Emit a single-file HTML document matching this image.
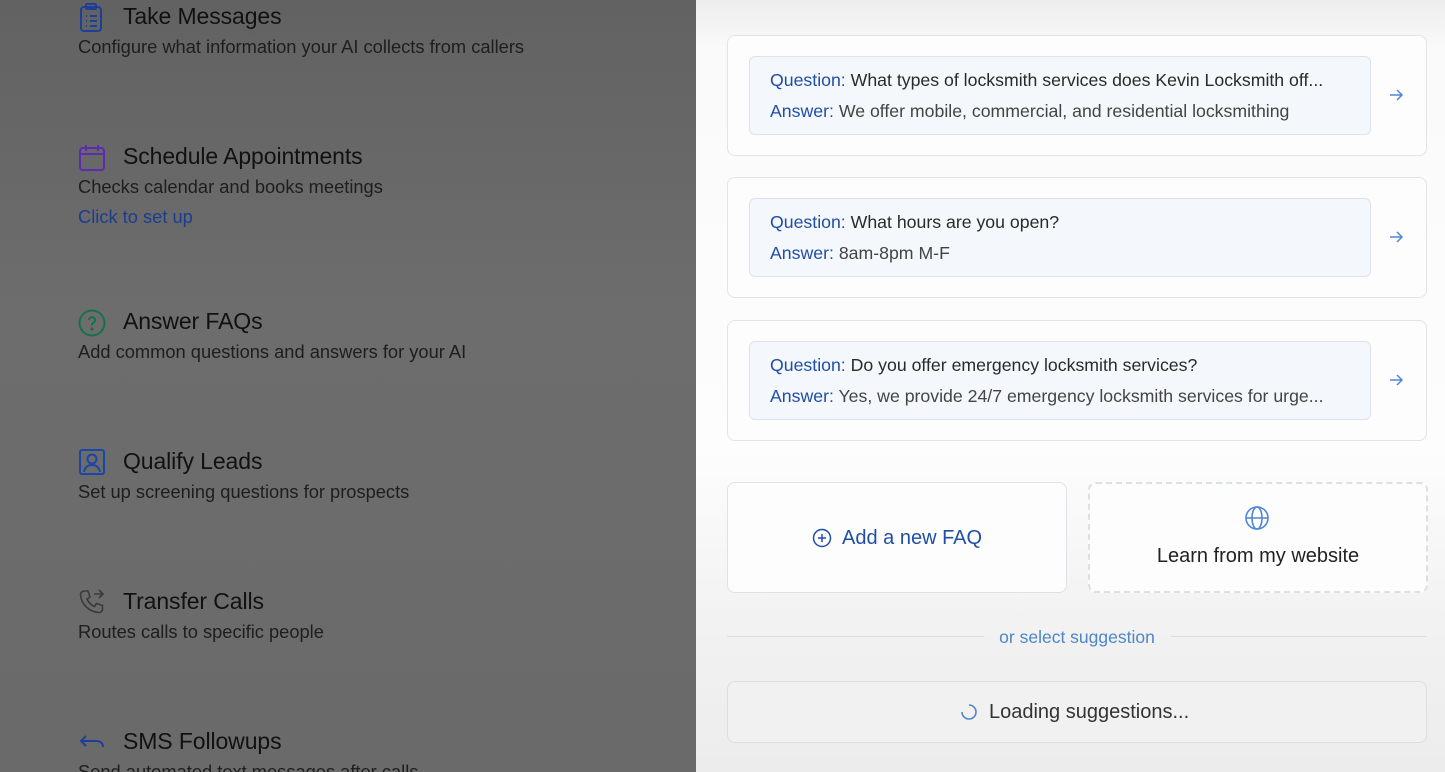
<!DOCTYPE html>
<html><head><meta charset="utf-8"><style>
*{margin:0;padding:0;box-sizing:border-box}
html,body{width:1445px;height:772px;overflow:hidden}
body{font-family:"Liberation Sans",sans-serif;position:relative;background:#6c6c6c}
#left{position:absolute;left:0;top:0;width:696px;height:772px;background:linear-gradient(#626262,#6d6d6d 40%,#6a6a6a)}
.it{position:absolute;left:78px}
.it svg{position:absolute;left:0;top:-13px}
.it .t{position:absolute;left:45px;top:-13px;font-size:23px;color:#111;white-space:nowrap;letter-spacing:-0.1px}
.it .d{position:absolute;left:0;top:20px;font-size:18.3px;color:#1e1e1e;white-space:nowrap}
.it .l{position:absolute;left:0;top:50px;font-size:18.3px;color:#1a3d8f;white-space:nowrap}
#right{position:absolute;left:696px;top:0;width:749px;height:772px;background:linear-gradient(#ededed,#fafafa 50px,#fdfdfd 450px,#f2f2f2 620px,#ececec)}
.card{position:absolute;left:31px;width:700px;height:121px;border:1px solid #e2e4e8;border-radius:8px;background:#fdfdfd}
.inner{position:absolute;left:21px;top:20px;width:622px;height:79px;border:1px solid #dde3ec;border-radius:6px;background:#f4f7fb;font-size:17.7px;color:#2a2a2a}
.inner div{position:absolute;left:20px;white-space:nowrap}
.q{top:13px}.a{top:44px;color:#444}
.inner b{font-weight:normal;color:#1f4ea5}
.arr{position:absolute;left:660px;top:51px}
.btn{position:absolute;top:482px;width:340px;height:111px;border-radius:8px;background:#fdfdfd}
</style></head><body>
<div id="left">
<div class="it" style="top:16px"><svg width="28" height="30" viewBox="0 0 28 30" fill="none" stroke="#1e3f96" stroke-width="2"><rect x="3" y="4" width="20" height="24" rx="3"/><rect x="8" y="1" width="10" height="5" rx="1"/><path d="M8 13h1M12 13h7M8 18h1M12 18h7M8 23h1M12 23h7"/></svg><div class="t">Take Messages</div><div class="d">Configure what information your AI collects from callers</div></div>
<div class="it" style="top:156px"><svg width="28" height="30" viewBox="0 0 28 30" fill="none" stroke="#5b2bb0" stroke-width="2"><rect x="2" y="5" width="24" height="22" rx="3"/><path d="M2 11h24M8 2v6M20 2v6"/></svg><div class="t">Schedule Appointments</div><div class="d">Checks calendar and books meetings</div><div class="l">Click to set up</div></div>
<div class="it" style="top:321px"><svg width="30" height="30" viewBox="0 0 30 30" fill="none" stroke="#14714d" stroke-width="2"><circle cx="14" cy="15" r="12.5"/><path d="M11 12a3 3 0 1 1 4 3c-1 .5-1 1-1 2.5"/><circle cx="14" cy="21" r=".6" fill="#14714d"/></svg><div class="t">Answer FAQs</div><div class="d">Add common questions and answers for your AI</div></div>
<div class="it" style="top:461px"><svg width="30" height="30" viewBox="0 0 30 30" fill="none" stroke="#1a46a6" stroke-width="2"><rect x="2" y="2" width="24" height="24" rx="2"/><circle cx="14" cy="11" r="4.5"/><path d="M6 24c1-5 4-7 8-7s7 2 8 7"/></svg><div class="t">Qualify Leads</div><div class="d">Set up screening questions for prospects</div></div>
<div class="it" style="top:601px"><svg width="30" height="30" viewBox="0 0 30 30" fill="none" stroke="#3a3a3a" stroke-width="1.6"><path d="M6 3l4 0 2 6-3 2c1.5 3.5 4 6 7.5 7.5l2-3 6 2v4c0 2-2 3-3.5 3C11 24 3 16 2.5 6.5 2.5 5 4 3 6 3z"/><path d="M16 6h9M21 2l4 4-4 4"/></svg><div class="t">Transfer Calls</div><div class="d">Routes calls to specific people</div></div>
<div class="it" style="top:741px"><svg width="30" height="30" viewBox="0 0 30 30" fill="none" stroke="#1e3f96" stroke-width="2"><path d="M8 8l-5 5 5 5M3 13h16c3 0 6 2 6 6"/></svg><div class="t">SMS Followups</div><div class="d">Send automated text messages after calls</div></div>
</div>
<div id="right">
<div class="card" style="top:35px"><div class="inner"><div class="q"><b>Question:</b> What types of locksmith services does Kevin Locksmith off...</div><div class="a"><b>Answer:</b> We offer mobile, commercial, and residential locksmithing</div></div><svg class="arr" width="16" height="16" viewBox="0 0 16 16" fill="none" stroke="#4f86d6" stroke-width="1.5"><path d="M2 8h12M9 3l5 5-5 5"/></svg></div>
<div class="card" style="top:177px"><div class="inner"><div class="q"><b>Question:</b> What hours are you open?</div><div class="a"><b>Answer:</b> 8am-8pm M-F</div></div><svg class="arr" width="16" height="16" viewBox="0 0 16 16" fill="none" stroke="#4f86d6" stroke-width="1.5"><path d="M2 8h12M9 3l5 5-5 5"/></svg></div>
<div class="card" style="top:320px"><div class="inner"><div class="q"><b>Question:</b> Do you offer emergency locksmith services?</div><div class="a"><b>Answer:</b> Yes, we provide 24/7 emergency locksmith services for urge...</div></div><svg class="arr" width="16" height="16" viewBox="0 0 16 16" fill="none" stroke="#4f86d6" stroke-width="1.5"><path d="M2 8h12M9 3l5 5-5 5"/></svg></div>
<div class="btn" style="left:31px;border:1px solid #dfe3e8"><svg style="position:absolute;left:84px;top:45px" width="20" height="20" viewBox="0 0 20 20" fill="none" stroke="#1f4ea5" stroke-width="1.5"><circle cx="10" cy="10" r="8.5"/><path d="M10 6v8M6 10h8"/></svg><div style="position:absolute;left:114px;top:44px;font-size:20px;color:#1f4ea5">Add a new FAQ</div></div>
<div class="btn" style="left:392px;border:2px dashed #dcdfe3"><svg style="position:absolute;left:154px;top:21px" width="26" height="26" viewBox="0 0 26 26" fill="none" stroke="#4f86d6" stroke-width="1.6"><circle cx="13" cy="13" r="11"/><ellipse cx="13" cy="13" rx="5" ry="11"/><path d="M2 13h22"/></svg><div style="position:absolute;left:0;width:100%;text-align:center;top:61px;font-size:20px;color:#222">Learn from my website</div></div>
<div style="position:absolute;left:31px;top:636px;width:257px;border-top:1px solid #dcdde0"></div>
<div style="position:absolute;left:474px;top:636px;width:257px;border-top:1px solid #dcdde0"></div>
<div style="position:absolute;left:288px;width:186px;text-align:center;top:627px;font-size:17.5px;color:#4f86c6">or select suggestion</div>
<div style="position:absolute;left:31px;top:681px;width:700px;height:62px;border:1px solid #dcdee2;border-radius:8px;background:#f1f1f1"><svg style="position:absolute;left:232px;top:21px" width="18" height="18" viewBox="0 0 18 18" fill="none" stroke="#4f86c6" stroke-width="1.6"><path d="M9 2a7 7 0 1 1-7 7"/></svg><div style="position:absolute;left:261px;top:19px;font-size:20px;color:#333">Loading suggestions...</div></div>
</div>
</body></html>
